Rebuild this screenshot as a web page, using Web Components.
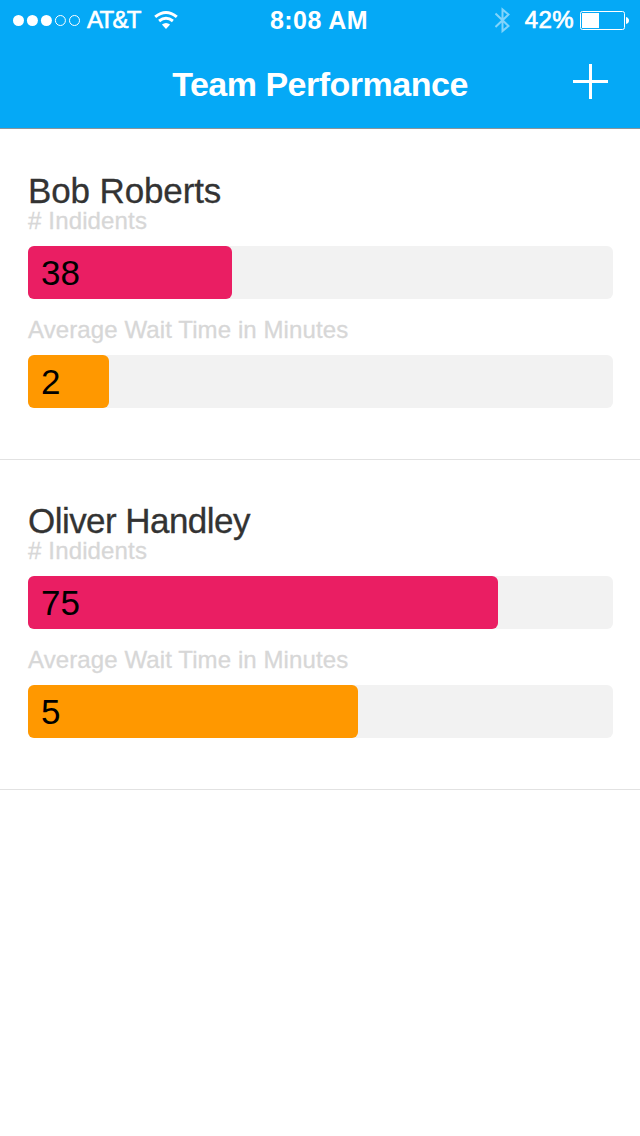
<!DOCTYPE html>
<html lang="en">
<head>
<meta charset="utf-8">
<title>Team Performance</title>
<style>
html, body { margin: 0; background: #fff; }
body { font-family: "Liberation Sans", Arial, sans-serif; width: 640px; height: 1136px; overflow: hidden; }
</style>
</head>
<body>
<team-app></team-app>
<script>
function define(name, html, setup) {
  const template = document.createElement('template');
  template.innerHTML = html;
  customElements.define(name, class extends HTMLElement {
    connectedCallback() {
      if (this.shadowRoot) return;
      this.attachShadow({ mode: 'open' }).append(template.content.cloneNode(true));
      if (setup) setup(this, this.shadowRoot);
    }
  });
}

define('status-bar', `
<style>
:host { display: grid; grid-template-columns: 1fr auto 1fr; height: 40px; align-items: center; color: #fff; font-size: 24px; line-height: 42px; white-space: nowrap; }
div { display: flex; align-items: center; height: 40px; }
svg { display: block; flex: none; }
.left { padding-left: 12px; }
.carrier { width: 53px; margin-left: 6px; letter-spacing: -1.7px; -webkit-text-stroke: .6px #fff; }
.wifi { margin-left: 14px; }
.time { font-size: 25px; font-weight: bold; letter-spacing: .45px; padding-right: 2px; }
.right { justify-content: flex-end; padding-right: 11px; }
.pct { margin: 0 6px 0 14px; -webkit-text-stroke: .7px #fff; letter-spacing: .4px; }
</style>
<div class="left">
<svg width="69" height="40" viewBox="0 0 69 40"><g fill="#fff"><circle cx="6.5" cy="20.5" r="5.5"/><circle cx="20.4" cy="20.5" r="5.5"/><circle cx="34.4" cy="20.5" r="5.5"/></g><g fill="none" stroke="#fff"><circle cx="48.4" cy="20.5" r="5"/><circle cx="62.5" cy="20.5" r="5"/></g></svg>
<span class="carrier">AT&amp;T</span>
<svg class="wifi" width="24" height="40" viewBox="0 0 24 40"><g fill="none" stroke="#fff" stroke-width="3"><path d="M1.2 16.9Q12 8 22.8 16.9"/><path d="M5.1 21Q12 15.4 18.9 21"/></g><path fill="#fff" d="M7.9 24.6Q12 21.2 16.1 24.6L12 29Z"/></svg>
</div>
<div class="time">8:08 AM</div>
<div class="right">
<svg width="16" height="40" viewBox="0 0 16 40" fill="none" stroke="#fff" stroke-opacity=".5" stroke-width="2"><path d="M.5 13.5L13.5 26L7.5 31V9.5L13.5 14.5L.5 27"/></svg>
<span class="pct">42%</span>
<svg width="49" height="40" viewBox="0 0 49 40"><rect x=".5" y="11.5" width="44" height="18" rx="2" fill="none" stroke="#fff"/><rect x="2" y="13" width="17" height="15" fill="#fff"/><path fill="#fff" d="M46 17Q49 18 49 20.5T46 24Z"/></svg>
</div>`);

define('nav-bar', `
<style>
:host { display: grid; grid-template-columns: 68px 1fr 68px; height: 88px; align-items: center; color: #fff; border-bottom: 1px solid #8a959c; }
h1 { margin: 0; font-size: 34px; line-height: 88px; text-align: center; letter-spacing: -.5px; white-space: nowrap; }
svg { display: block; }
</style>
<span></span><h1><slot></slot></h1>
<svg width="68" height="88" viewBox="0 0 68 88"><path fill="#fff" d="M17 24h3v16h16v3H20v16h-3V43H1v-3h16z"/></svg>`);

define('metric-bar', `
<style>
:host { display: block; height: 109px; }
.label { height: 28px; line-height: 28px; font-size: 24px; color: #d7d7d7; letter-spacing: var(--label-spacing, .1px); -webkit-text-stroke: .3px #d7d7d7; white-space: nowrap; }
.track { margin-top: 11px; width: 585px; height: 53px; border-radius: 6px; background: #f2f2f2; }
.fill { height: 53px; box-sizing: border-box; border-radius: 6px; padding-left: 13px; font-size: 35px; line-height: 54px; color: #000; width: var(--size); background: var(--tint); }
</style>
<div class="label"><slot></slot></div>
<div class="track"><div class="fill"></div></div>`, (host, root) => {
  const fill = root.querySelector('.fill');
  fill.textContent = host.getAttribute('value');
  fill.style.setProperty('--size', host.getAttribute('size') + 'px');
  fill.style.setProperty('--tint', host.getAttribute('tint'));
});

define('member-card', `
<style>
:host { display: block; box-sizing: border-box; height: 330px; padding: 42px 28px 0; border-bottom: 1px solid #e2e2e2; }
h2 { margin: 0; height: 35px; line-height: 38px; font-size: 35px; font-weight: normal; color: #333; letter-spacing: var(--name-spacing); -webkit-text-stroke: .3px #333; white-space: nowrap; }
</style>
<h2><slot name="name"></slot></h2><slot></slot>`, (host) => {
  host.style.setProperty('--name-spacing', host.getAttribute('spacing') + 'px');
});

define('team-app', `
<style>
:host { display: block; width: 640px; height: 1136px; background: #fff; }
header { background: #05a9f6; }
main { margin-top: 1px; }
.count { --label-spacing: .15px; }
</style>
<header><status-bar></status-bar><nav-bar>Team Performance</nav-bar></header>
<main>
<member-card spacing="-.12"><span slot="name">Bob Roberts</span>
<metric-bar class="count" value="38" size="204" tint="#ea1e63"># Indidents</metric-bar>
<metric-bar value="2" size="80.5" tint="#ff9800">Average Wait Time in Minutes</metric-bar></member-card>
<member-card spacing="-.55"><span slot="name">Oliver Handley</span>
<metric-bar class="count" value="75" size="470" tint="#ea1e63"># Indidents</metric-bar>
<metric-bar value="5" size="329.5" tint="#ff9800">Average Wait Time in Minutes</metric-bar></member-card>
</main>`);
</script>
</body>
</html>
